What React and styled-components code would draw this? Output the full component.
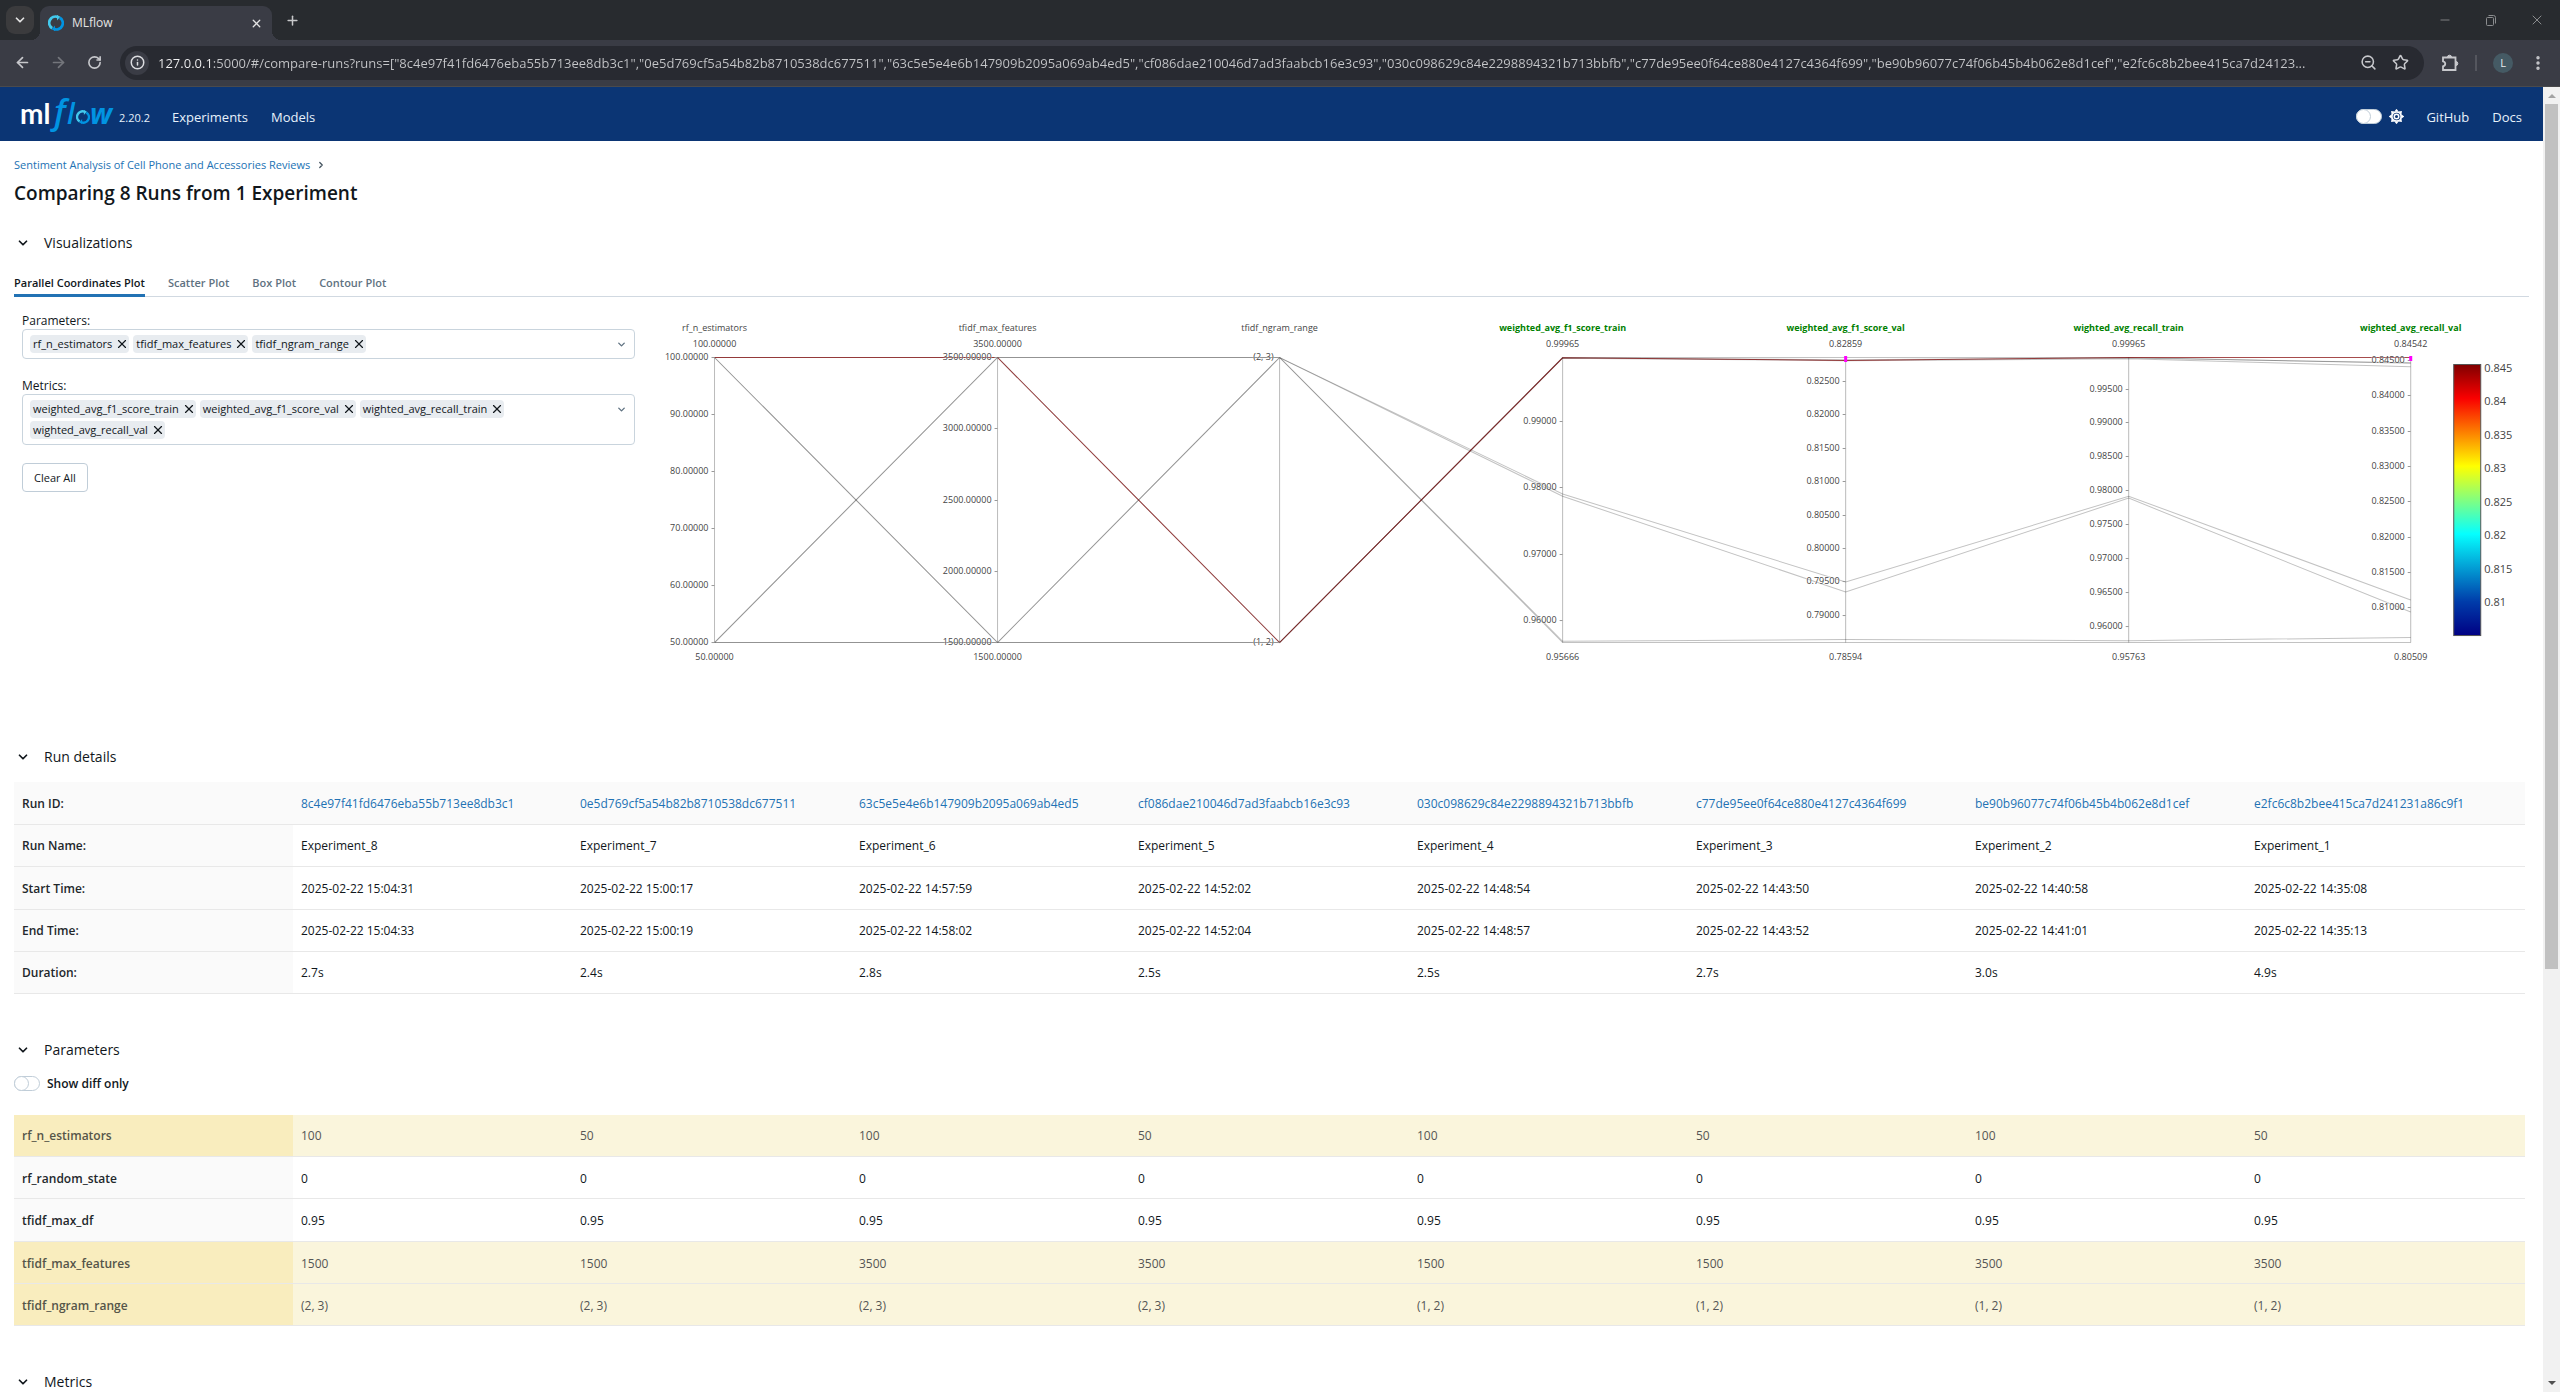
import React, { useState } from "react";
import styled, { createGlobalStyle, css } from "styled-components";
import {
  ArrowLeft,
  ArrowRight,
  RotateCw,
  Info,
  ChevronDown,
  ChevronRight,
  X,
  Plus,
  Minus,
  Star,
  ZoomOut,
  EllipsisVertical,
} from "lucide-react";

const sans = '"Open Sans", "Noto Sans", sans-serif';

const GlobalStyle = createGlobalStyle`
  *, *::before, *::after { box-sizing: border-box; }
  body { margin: 0; background: #fff; font-family: ${sans}; font-size: 12px; color: #11171c; }
  button, input { font: inherit; color: inherit; }
  button { padding: 0; border: 0; background: none; cursor: pointer; }
  a { color: inherit; text-decoration: none; }
`;

const Screen = styled.div`
  display: flex;
  flex-direction: column;
  height: 100vh;
  overflow: hidden;
`;

/* ---------- browser frame ---------- */

const TabStrip = styled.div`
  display: flex;
  align-items: flex-end;
  flex: none;
  height: 40px;
  padding-left: 6px;
  background: #282b2f;
  color: #e3e3e3;
`;

const TabSearch = styled.button`
  display: grid;
  place-items: center;
  width: 28px;
  height: 28px;
  margin: 0 6px 6px 0;
  border-radius: 9px;
  background: #3b3b3d;
`;

const BrowserTab = styled.div`
  position: relative;
  display: flex;
  align-items: center;
  gap: 8px;
  width: 232px;
  height: 34px;
  padding: 0 8px;
  border-radius: 9px 9px 0 0;
  background: #3a3c45;

  &::before,
  &::after {
    content: "";
    position: absolute;
    bottom: 0;
    width: 9px;
    height: 9px;
  }
  &::before {
    left: -9px;
    background: radial-gradient(circle at 0 0, transparent 9px, #3a3c45 9px);
  }
  &::after {
    right: -9px;
    background: radial-gradient(circle at 100% 0, transparent 9px, #3a3c45 9px);
  }
`;

const TabTitle = styled.span`
  flex: 1;
  line-height: 16px;
`;

const StripButton = styled.button`
  display: grid;
  place-items: center;
  width: 16px;
  height: 40px;
`;

const NewTab = styled(StripButton)`
  margin-left: 12px;
  color: #c7c8ca;
`;

const WindowControls = styled.div`
  display: flex;
  gap: 30px;
  margin-left: auto;
  padding-right: 15px;
  color: #8b8d8f;
`;

const Toolbar = styled.div`
  display: flex;
  align-items: center;
  flex: none;
  height: 47px;
  padding: 0 13px 1px 13px;
  background: #3a3c45;
  border-bottom: 1px solid #4a4a4c;
  color: #c7c8cc;
`;

const NavButtons = styled.div`
  display: flex;
  gap: 18px;
  margin-right: 17px;
`;

const ToolButton = styled.button`
  display: grid;
  place-items: center;
  width: 18px;
  height: 18px;
  color: ${(p) => (p.$dim ? "#74767c" : "inherit")};
`;

const AddressBar = styled.div`
  display: flex;
  align-items: center;
  flex: 1;
  gap: 9px;
  height: 34px;
  padding: 0 15px 0 5px;
  border-radius: 17px;
  background: #282a31;
`;

const AddressActions = styled.div`
  display: flex;
  gap: 14px;
  margin-left: 5px;
`;

const SiteInfo = styled.button`
  display: grid;
  place-items: center;
  width: 24px;
  height: 24px;
  border-radius: 12px;
  background: #3a3c45;
  color: #dcdde0;
`;

const AddressInput = styled.input`
  flex: 1;
  min-width: 0;
  height: 24px;
  padding: 0;
  border: 0;
  outline: 0;
  font-size: 13px;
  text-overflow: ellipsis;
  color: transparent;
  background: linear-gradient(90deg, #f2f2f3 54px, #c5c6c9 54px);
  background-clip: text;
  -webkit-background-clip: text;
`;

const ToolbarEnd = styled.div`
  display: flex;
  align-items: center;
  gap: 16px;
  margin-left: 17px;
`;

const Divider = styled.span`
  width: 2px;
  height: 16px;
  background: #54565e;
`;

const Avatar = styled.button`
  width: 20px;
  height: 20px;
  border-radius: 10px;
  background: #455a64;
  color: #e8eaed;
  font-size: 11px;
  line-height: 20px;
`;

/* ---------- page frame ---------- */

const Viewport = styled.div`
  display: flex;
  flex: 1;
  min-height: 0;
`;

const Page = styled.div`
  flex: 1;
  min-width: 0;
  overflow: hidden;
`;

const Scrollbar = styled.div`
  display: flex;
  flex-direction: column;
  align-items: center;
  justify-content: space-between;
  width: 17px;
  padding: 7px 1px;
  background: #f1f1f1;
`;

const Thumb = styled.div`
  width: 13px;
  height: 67%;
  margin: 6px 0 auto;
  background: #c1c1c1;
`;

const ScrollArrow = styled.span`
  width: 0;
  height: 0;
  border: 4px solid transparent;
  ${(p) =>
    p.$up
      ? "border-top-width: 0; border-bottom-color: #a3a3a3;"
      : "border-bottom-width: 0; border-top-color: #505050;"}
`;

const Header = styled.header`
  display: flex;
  align-items: center;
  height: 54px;
  padding: 0 21px 0 20px;
  background: #0b3574;
  color: #fff;
`;

const LogoLink = styled.a`
  display: flex;
  align-items: center;
  height: 54px;
`;

const Version = styled.span`
  margin: 8px 22px 0 3px;
  font-size: 11px;
  line-height: 16px;
  color: #e7f1fb;
`;

const NavLink = styled.a`
  margin-top: 6px;
  font-size: 13px;
  line-height: 20px;
  color: #e7f1fb;
  & + & {
    margin-left: 23px;
  }
`;

const HeaderRight = styled.div`
  display: flex;
  align-items: center;
  margin-left: auto;
`;

const ThemeToggle = styled.span`
  display: flex;
  align-items: center;
  gap: 7px;
  margin: 4px 22px 0 0;
`;

const Switch = styled.input`
  appearance: none;
  flex: none;
  width: 26px;
  height: 15px;
  margin: 0;
  border: 1px solid #c0cdd8;
  border-radius: 8px;
  background: #fff;
  cursor: pointer;

  &::before {
    content: "";
    display: block;
    width: 15px;
    height: 15px;
    margin: -1px;
    border: 1px solid #c0cdd8;
    border-radius: 8px;
    background: #fff;
  }
  &:checked::before {
    margin-left: 10px;
  }
`;

const Content = styled.main`
  padding: 15px 14px 0;
`;

const Breadcrumb = styled.nav`
  display: flex;
  align-items: center;
  gap: 6px;
  font-size: 11px;
  line-height: 18px;
  color: #44535f;
  a {
    color: #2272b4;
  }
`;

const Title = styled.h1`
  margin: 5px 0 26px;
  font-size: 19px;
  font-weight: 600;
  line-height: 28px;
`;

const SectionHeader = styled.button`
  display: flex;
  align-items: center;
  gap: 14px;
  padding-left: 2px;
  font-size: 14px;
  line-height: 20px;
`;

const Section = styled.section`
  & + & {
    margin-top: 46px;
  }
`;

const Tabs = styled.div`
  display: flex;
  gap: 23px;
  height: 24px;
  margin-top: 20px;
  border-bottom: 1px solid #d1d9e1;
`;

const Tab = styled.button`
  height: 24px;
  padding-bottom: 1px;
  font-size: 11px;
  line-height: 20px;
  font-weight: 600;
  color: ${(p) => (p.$active ? "#11171c" : "#5f7281")};
  border-bottom: 3px solid ${(p) => (p.$active ? "#2272b4" : "transparent")};
`;

const PlotRow = styled.div`
  display: flex;
`;

const PlotControls = styled.div`
  flex: none;
  width: 25%;
  padding: 15px 8px 0;
`;

const PlotArea = styled.div`
  flex: 1;
  min-width: 0;
  padding-top: 13px;
`;

const PlotSvg = styled.svg`
  display: block;
  width: 100%;
  height: auto;
  font-family: ${sans};
  font-size: 9px;
  fill: #444;
`;

const Field = styled.div`
  margin-bottom: 18px;
`;

const FieldLabel = styled.label`
  display: block;
  font-size: 12px;
  line-height: 17px;
`;

const MultiSelect = styled.div`
  display: flex;
  align-items: flex-start;
  padding: 5px 8px 5px 7px;
  border: 1px solid #c9d4dd;
  border-radius: 4px;
`;

const TagList = styled.div`
  display: flex;
  flex-wrap: wrap;
  gap: 3px 4px;
  flex: 1;
  padding-right: 50px;
`;

const Tag = styled.span`
  display: flex;
  align-items: center;
  gap: 3px;
  height: 18px;
  padding: 0 2px 0 3px;
  border-radius: 4px;
  background: #e8ecf0;
  font-size: 11px;
  line-height: 18px;
`;

const TagRemove = styled.button`
  display: grid;
  place-items: center;
  width: 12px;
  height: 18px;
`;

const TagInput = styled.input`
  width: 4px;
  height: 18px;
  padding: 0;
  border: 0;
  outline: 0;
  background: transparent;
`;

const OpenButton = styled.button`
  display: grid;
  place-items: center;
  width: 10px;
  height: 18px;
  color: #5f7281;
`;

const ClearButton = styled.button`
  height: 29px;
  padding: 0 11px;
  border: 1px solid #c0cdd8;
  border-radius: 4px;
  font-size: 11px;
  line-height: 20px;
`;

const DiffToggle = styled.label`
  display: flex;
  align-items: center;
  gap: 7px;
  height: 18px;
  margin-top: 15px;
  font-weight: 600;
`;

const Table = styled.table`
  width: calc(100% - 4px);
  margin-top: ${(p) => p.$gap};
  table-layout: fixed;
  border-collapse: collapse;
`;

const Row = styled.tr`
  height: 42px;
  border-bottom: 1px solid #e8e8e8;
  &:nth-child(3n) {
    height: 43px;
  }
`;

const cell = css`
  padding: 2px 8px 0;
  text-align: left;
  line-height: 20px;
`;

const HeadCell = styled.th`
  ${cell}
  font-weight: 600;
  color: ${(p) => (p.$diff ? "#555549" : "#22272b")};
  background: ${(p) => (p.$diff ? "#f9edbe" : "#fafafa")};
`;

const Cell = styled.td`
  ${cell}
  color: ${(p) => (p.$diff ? "#555" : "#11171c")};
  background: ${(p) => (p.$diff ? "#faf5dc" : p.$shaded ? "#fafafa" : "#fff")};
  a {
    color: #2272b4;
  }
`;

/* ---------- drawings ---------- */

function Ring({ size, ...rest }) {
  return (
    <svg width={size} height={size} viewBox="0 0 16 16" fill="none" {...rest}>
      <path d="M4.2 13.2A6.3 6.3 0 0 1 9.6 1.9" stroke="#43c9ed" strokeWidth="2.8" />
      <path d="M9 0v5.6l3.4-3.8z" fill="#43c9ed" />
      <path d="M11.8 2.8A6.3 6.3 0 0 1 6.4 14.1" stroke="#0194e2" strokeWidth="2.8" />
      <path d="M7 16v-5.6l-3.4 3.8z" fill="#0194e2" />
    </svg>
  );
}

function MlflowLogo() {
  return (
    <svg width="96" height="54" viewBox="0 0 96 54" role="img" aria-label="mlflow">
      <text x="0" y="37" fontFamily="Lato, sans-serif" fontWeight="700" fontSize="28" fill="#fff">ml</text>
      <g fill="#0194e2" fontFamily={sans} fontStyle="italic">
        <text x="34" y="37" fontSize="34" fontWeight="600">f</text>
        <text x="47" y="37" fontSize="28" fontWeight="600">l</text>
        <text x="70" y="37" fontSize="28" fontWeight="700">w</text>
      </g>
      <Ring size={14} x="56" y="23" />
    </svg>
  );
}

function GearIcon() {
  const teeth = [0, 45, 90, 135, 180, 225, 270, 315];
  return (
    <svg width="15" height="15" viewBox="0 0 16 16">
      {teeth.map((a) => (
        <path key={a} d="M5.6 3 8-.2 10.4 3z" fill="#fff" transform={`rotate(${a} 8 8)`} />
      ))}
      <circle cx="8" cy="8" r="4.9" fill="none" stroke="#fff" strokeWidth="1.6" />
      <circle cx="8" cy="8" r="2.4" fill="none" stroke="#fff" strokeWidth="1.6" />
    </svg>
  );
}

function RestoreIcon() {
  return (
    <svg width="16" height="16" viewBox="0 0 16 16" fill="none" stroke="currentColor">
      <rect x="3.5" y="5.5" width="7" height="8" rx="1" />
      <path d="M5.5 3.5h5a2 2 0 0 1 2 2v6" />
    </svg>
  );
}

function ExtensionIcon() {
  return (
    <svg width="18" height="18" viewBox="0 0 18 18" fill="none" stroke="currentColor" strokeWidth="1.8">
      <path d="M2 7.300V3.500h12.500V16H2v-3.700c3-.6 3-4.400 0-5z" />
      <path d="M6.500 3a2 1.800 0 0 1 4 0zM15 7.500a1.800 2 0 0 1 0 4z" fill="currentColor" strokeWidth="1" />
    </svg>
  );
}

/* ---------- parallel coordinates ---------- */

const TOP = 47.5;
const BOTTOM = 332.5;

const axes = [
  { name: "rf_n_estimators", min: 50, max: 100, ticks: [50, 60, 70, 80, 90, 100] },
  { name: "tfidf_max_features", min: 1500, max: 3500, ticks: [1500, 2000, 2500, 3000, 3500] },
  { name: "tfidf_ngram_range", min: 0, max: 1, ticks: [0, 1], labels: ["(1, 2)", "(2, 3)"] },
  { name: "weighted_avg_f1_score_train", metric: true, min: 0.95666, max: 0.99965, ticks: [0.96, 0.97, 0.98, 0.99] },
  { name: "weighted_avg_f1_score_val", metric: true, min: 0.78594, max: 0.82859, ticks: [0.79, 0.795, 0.8, 0.805, 0.81, 0.815, 0.82, 0.825], brush: [46, 52] },
  { name: "wighted_avg_recall_train", metric: true, min: 0.95763, max: 0.99965, ticks: [0.96, 0.965, 0.97, 0.975, 0.98, 0.985, 0.99, 0.995] },
  { name: "wighted_avg_recall_val", metric: true, min: 0.80509, max: 0.84542, ticks: [0.81, 0.815, 0.82, 0.825, 0.83, 0.835, 0.84, 0.845], brush: [46, 51] },
];

const axisX = (i) => Math.round(71 + i * 282.7) + 0.5;
const axisY = (axis, v) => BOTTOM - ((v - axis.min) / (axis.max - axis.min)) * (BOTTOM - TOP);

const lines = [
  [100, 1500, 1, 0.97907, 0.795, 0.9792, 0.8111],
  [50, 1500, 1, 0.97872, 0.7935, 0.97892, 0.8094],
  [100, 3500, 1, 0.95685, 0.7864, 0.9579, 0.80581],
  [50, 3500, 1, 0.95666, 0.78594, 0.95763, 0.80509],
  [100, 1500, 0, 0.9996, 0.82825, 0.99958, 0.84467],
  [50, 1500, 0, 0.99955, 0.82812, 0.99945, 0.8441],
  [50, 3500, 0, 0.99965, 0.82859, 0.99965, 0.8446],
  [100, 3500, 0, 0.9996, 0.82815, 0.99965, 0.84542],
];

const scaleTicks = [0.845, 0.84, 0.835, 0.83, 0.825, 0.82, 0.815, 0.81];

const jet = [
  ["0%", "#800000"],
  ["12.5%", "#fa0000"],
  ["37.5%", "#ffff00"],
  ["62.5%", "#05ffff"],
  ["87.5%", "#003caa"],
  ["100%", "#000083"],
];

function ParallelPlot() {
  return (
    <PlotSvg viewBox="0 0 1886 391" role="img" aria-label="Parallel coordinates plot">
      <defs>
        <linearGradient id="jet" x1="0" y1="0" x2="0" y2="1">
          {jet.map(([offset, color]) => (
            <stop key={offset} offset={offset} stopColor={color} />
          ))}
        </linearGradient>
      </defs>
      <g fill="none">
        {lines.map((values, n) => (
          <polyline
            key={n}
            points={values.map((v, i) => `${axisX(i)},${axisY(axes[i], v)}`).join(" ")}
            stroke={n === lines.length - 1 ? "#800000" : "#000"}
            strokeOpacity={n === lines.length - 1 ? 0.7 : 0.24}
          />
        ))}
      </g>
      {axes.map((axis, i) => {
        const x = axisX(i);
        return (
          <g key={axis.name}>
            <path d={`M${x} ${TOP}V${BOTTOM}`} stroke="#000" strokeOpacity="0.27" />
            {axis.ticks.map((t, k) => (
              <g key={t}>
                <path d={`M${x - 3} ${Math.floor(axisY(axis, t)) + 0.5}h3`} stroke="#999" />
                <text x={x - 6} y={Math.floor(axisY(axis, t)) + 3} textAnchor="end" stroke="#fff" strokeWidth="1" strokeOpacity="0.6" paintOrder="stroke">
                  {axis.labels ? axis.labels[k] : t.toFixed(5)}
                </text>
              </g>
            ))}
            <text x={x} y="21" textAnchor="middle" fill={axis.metric ? "#008000" : "#444"} fontWeight={axis.metric ? 700 : 400}>
              {axis.name}
            </text>
            {!axis.labels && (
              <>
                <text x={x} y="37" textAnchor="middle">{axis.max.toFixed(5)}</text>
                <text x={x} y="350" textAnchor="middle">{axis.min.toFixed(5)}</text>
              </>
            )}
            {axis.brush && (
              <path d={`M${x} ${axis.brush[0]}V${axis.brush[1]}`} stroke="#f0f" strokeWidth="3" />
            )}
          </g>
        );
      })}
      <rect x="1810.5" y="54.5" width="27" height="271" fill="url(#jet)" stroke="#555" />
      <g fontSize="11">
        {scaleTicks.map((t) => (
          <text key={t} x="1841" y={329 - ((t - 0.80509) / 0.04033) * 270}>{t}</text>
        ))}
      </g>
    </PlotSvg>
  );
}

/* ---------- data ---------- */

const url =
  '127.0.0.1:5000/#/compare-runs?runs=["8c4e97f41fd6476eba55b713ee8db3c1","0e5d769cf5a54b82b8710538dc677511","63c5e5e4e6b147909b2095a069ab4ed5","cf086dae210046d7ad3faabcb16e3c93","030c098629c84e2298894321b713bbfb","c77de95ee0f64ce880e4127c4364f699","be90b96077c74f06b45b4b062e8d1cef","e2fc6c8b2bee415ca7d24123...';

const runIds = [
  "8c4e97f41fd6476eba55b713ee8db3c1",
  "0e5d769cf5a54b82b8710538dc677511",
  "63c5e5e4e6b147909b2095a069ab4ed5",
  "cf086dae210046d7ad3faabcb16e3c93",
  "030c098629c84e2298894321b713bbfb",
  "c77de95ee0f64ce880e4127c4364f699",
  "be90b96077c74f06b45b4b062e8d1cef",
  "e2fc6c8b2bee415ca7d241231a86c9f1",
];

const day = (times) => times.map((t) => `2025-02-22 ${t}`);

const details = [
  ["Run Name:", [8, 7, 6, 5, 4, 3, 2, 1].map((n) => `Experiment_${n}`)],
  ["Start Time:", day(["15:04:31", "15:00:17", "14:57:59", "14:52:02", "14:48:54", "14:43:50", "14:40:58", "14:35:08"])],
  ["End Time:", day(["15:04:33", "15:00:19", "14:58:02", "14:52:04", "14:48:57", "14:43:52", "14:41:01", "14:35:13"])],
  ["Duration:", ["2.7s", "2.4s", "2.8s", "2.5s", "2.5s", "2.7s", "3.0s", "4.9s"]],
];

const params = [
  ["rf_n_estimators", ["100", "50", "100", "50", "100", "50", "100", "50"], true],
  ["rf_random_state", Array(8).fill("0"), false],
  ["tfidf_max_df", Array(8).fill("0.95"), false],
  ["tfidf_max_features", ["1500", "1500", "3500", "3500", "1500", "1500", "3500", "3500"], true],
  ["tfidf_ngram_range", ["(2, 3)", "(2, 3)", "(2, 3)", "(2, 3)", "(1, 2)", "(1, 2)", "(1, 2)", "(1, 2)"], true],
];

/* ---------- components ---------- */

function Collapsible({ title }) {
  return (
    <SectionHeader aria-expanded="true">
      <ChevronDown size={14} strokeWidth={3} />
      {title}
    </SectionHeader>
  );
}

function TagField({ id, label, tags }) {
  return (
    <Field>
      <FieldLabel htmlFor={id}>{label}</FieldLabel>
      <MultiSelect>
        <TagList>
          {tags.map((t) => (
            <Tag key={t}>
              {t}
              <TagRemove aria-label={`Remove ${t}`}>
                <X size={14} strokeWidth={2} />
              </TagRemove>
            </Tag>
          ))}
          <TagInput id={id} />
        </TagList>
        <OpenButton aria-label={`Open ${label}`}>
          <ChevronDown size={11} strokeWidth={3} />
        </OpenButton>
      </MultiSelect>
    </Field>
  );
}

export default function App() {
  const [diffOnly, setDiffOnly] = useState(false);
  return (
    <Screen>
      <GlobalStyle />
      <TabStrip>
        <TabSearch aria-label="Search tabs"><ChevronDown size={14} strokeWidth={3} /></TabSearch>
        <BrowserTab>
          <Ring size={16} />
          <TabTitle>MLflow</TabTitle>
          <StripButton aria-label="Close tab"><X size={13} strokeWidth={2.4} /></StripButton>
        </BrowserTab>
        <NewTab aria-label="New tab"><Plus size={15} strokeWidth={2.4} /></NewTab>
        <WindowControls>
          <StripButton aria-label="Minimize"><Minus size={14} strokeWidth={1.5} /></StripButton>
          <StripButton aria-label="Restore"><RestoreIcon /></StripButton>
          <StripButton aria-label="Close"><X size={16} strokeWidth={1.5} /></StripButton>
        </WindowControls>
      </TabStrip>
      <Toolbar>
        <NavButtons>
          <ToolButton aria-label="Back"><ArrowLeft size={17} strokeWidth={2.4} /></ToolButton>
          <ToolButton aria-label="Forward" $dim><ArrowRight size={17} strokeWidth={2.4} /></ToolButton>
          <ToolButton aria-label="Reload"><RotateCw size={15} strokeWidth={2.6} /></ToolButton>
        </NavButtons>
        <AddressBar>
          <SiteInfo aria-label="Site information"><Info size={15} strokeWidth={2.4} /></SiteInfo>
          <AddressInput aria-label="Address" defaultValue={url} />
          <AddressActions>
            <ToolButton aria-label="Zoom"><ZoomOut size={17} strokeWidth={2.2} /></ToolButton>
            <ToolButton aria-label="Bookmark"><Star size={17} strokeWidth={2.2} /></ToolButton>
          </AddressActions>
        </AddressBar>
        <ToolbarEnd>
          <ToolButton aria-label="Extensions"><ExtensionIcon /></ToolButton>
          <Divider />
          <Avatar aria-label="Profile">L</Avatar>
          <ToolButton aria-label="Menu"><EllipsisVertical size={18} strokeWidth={2.6} /></ToolButton>
        </ToolbarEnd>
      </Toolbar>

      <Viewport>
        <Page>
          <Header>
            <LogoLink href="#/" aria-label="MLflow home"><MlflowLogo /></LogoLink>
            <Version>2.20.2</Version>
            <NavLink href="#/experiments">Experiments</NavLink>
            <NavLink href="#/models">Models</NavLink>
            <HeaderRight>
              <ThemeToggle>
                <Switch type="checkbox" role="switch" aria-label="Dark theme" />
                <GearIcon />
              </ThemeToggle>
              <NavLink href="#github">GitHub</NavLink>
              <NavLink href="#docs">Docs</NavLink>
            </HeaderRight>
          </Header>

          <Content>
            <Breadcrumb>
              <a href="#/experiments/1">Sentiment Analysis of Cell Phone and Accessories Reviews</a>
              <ChevronRight size={10} strokeWidth={3} />
            </Breadcrumb>
            <Title>Comparing 8 Runs from 1 Experiment</Title>

            <Section>
              <Collapsible title="Visualizations" />
              <Tabs role="tablist">
                <Tab role="tab" $active aria-selected="true">Parallel Coordinates Plot</Tab>
                <Tab role="tab">Scatter Plot</Tab>
                <Tab role="tab">Box Plot</Tab>
                <Tab role="tab">Contour Plot</Tab>
              </Tabs>
              <PlotRow>
                <PlotControls>
                  <TagField id="params" label="Parameters:" tags={["rf_n_estimators", "tfidf_max_features", "tfidf_ngram_range"]} />
                  <TagField
                    id="metrics"
                    label="Metrics:"
                    tags={["weighted_avg_f1_score_train", "weighted_avg_f1_score_val", "wighted_avg_recall_train", "wighted_avg_recall_val"]}
                  />
                  <ClearButton>Clear All</ClearButton>
                </PlotControls>
                <PlotArea><ParallelPlot /></PlotArea>
              </PlotRow>
            </Section>

            <Section>
              <Collapsible title="Run details" />
              <Table $gap="15px">
                <tbody>
                  <Row>
                    <HeadCell scope="row">Run ID:</HeadCell>
                    {runIds.map((id) => (
                      <Cell key={id} $shaded><a href={`#/runs/${id}`}>{id}</a></Cell>
                    ))}
                  </Row>
                  {details.map(([label, values]) => (
                    <Row key={label}>
                      <HeadCell scope="row">{label}</HeadCell>
                      {values.map((v, i) => <Cell key={i}>{v}</Cell>)}
                    </Row>
                  ))}
                </tbody>
              </Table>
            </Section>

            <Section>
              <Collapsible title="Parameters" />
              <DiffToggle>
                <Switch type="checkbox" role="switch" checked={diffOnly} onChange={(e) => setDiffOnly(e.target.checked)} />
                Show diff only
              </DiffToggle>
              <Table $gap="22px">
                <tbody>
                  {params.filter((p) => !diffOnly || p[2]).map(([label, values, diff]) => (
                    <Row key={label}>
                      <HeadCell scope="row" $diff={diff}>{label}</HeadCell>
                      {values.map((v, i) => <Cell key={i} $diff={diff}>{v}</Cell>)}
                    </Row>
                  ))}
                </tbody>
              </Table>
            </Section>

            <Section>
              <Collapsible title="Metrics" />
            </Section>
          </Content>
        </Page>
        <Scrollbar aria-hidden="true">
          <ScrollArrow $up />
          <Thumb />
          <ScrollArrow />
        </Scrollbar>
      </Viewport>
    </Screen>
  );
}
